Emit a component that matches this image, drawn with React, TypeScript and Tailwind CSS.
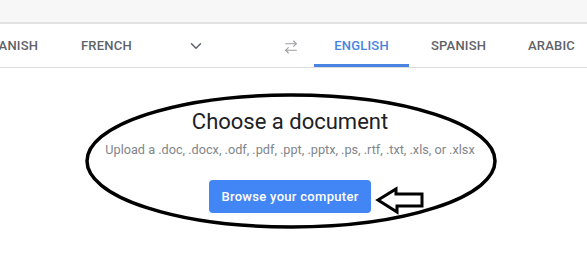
import { ArrowRightLeft, ChevronDown } from "lucide-react";

const FONT = "font-['Roboto','Liberation_Sans',sans-serif]";

function Tab({
  label,
  active,
  className = "",
}: {
  label: string;
  active?: boolean;
  className?: string;
}) {
  return (
    <div
      className={`relative flex shrink-0 items-center text-[13px] font-medium tracking-[0.2px] ${
        active ? "text-[#4a84e2]" : "text-[#5f6368]"
      } ${className}`}
    >
      {label}
      {active && (
        <span className="absolute bottom-0 left-0 right-0 h-[3px] bg-[#4a84e2]" />
      )}
    </div>
  );
}

export default function App() {
  return (
    <div className={`relative h-[269px] w-[587px] overflow-hidden bg-white ${FONT}`}>
      {/* top strip */}
      <div className="h-[24px] border-b-2 border-[#e2e2e2] bg-[#f7f7f7]" />

      {/* language tabs */}
      <div className="flex h-[44px] border-b border-[#dcdcdc]">
        <Tab label="SPANISH" className="ml-[-17px] w-[98px]" />
        <Tab label="FRENCH" className="w-[101px]" />
        <div className="flex w-[28px] shrink-0 items-center justify-center text-[#5f6368]">
          <ChevronDown size={18} strokeWidth={2} />
        </div>
        <div className="ml-[69px] flex w-[24px] shrink-0 items-center justify-center pt-[2px] text-[#9a9da1]">
          <ArrowRightLeft size={16} strokeWidth={1.6} />
        </div>
        <Tab label="ENGLISH" active className="ml-[11px] w-[95px] justify-center" />
        <Tab label="SPANISH" className="ml-[22px] w-[97px]" />
        <Tab label="ARABIC" />
      </div>

      {/* upload area */}
      <div className="flex flex-col items-center pr-[7px] pt-[40px]">
        <h1 className="text-[22px] leading-[28px] text-[#202124]">Choose a document</h1>
        <p className="mt-[6px] text-[12.7px] leading-[16px] text-[#80868b]">
          Upload a .doc, .docx, .odf, .pdf, .ppt, .pptx, .ps, .rtf, .txt, .xls, or .xlsx
        </p>
        <button className="mt-[22px] h-[33px] w-[162px] rounded-[4px] bg-[#4285f4] text-[13px] font-medium tracking-[0.3px] text-white">
          Browse your computer
        </button>
      </div>

      {/* hand-drawn annotation */}
      <svg
        className="pointer-events-none absolute left-0 top-0"
        width="587"
        height="269"
        viewBox="0 0 587 269"
      >
        <ellipse
          cx="291"
          cy="161"
          rx="204"
          ry="66"
          fill="none"
          stroke="#000"
          strokeWidth="3.5"
        />
        <path
          d="M378 200 L396 189 L396 194 L422 194 L422 206 L397 206 L397 212 Z"
          fill="#fff"
          stroke="#000"
          strokeWidth="3"
          strokeLinejoin="miter"
        />
      </svg>
    </div>
  );
}
